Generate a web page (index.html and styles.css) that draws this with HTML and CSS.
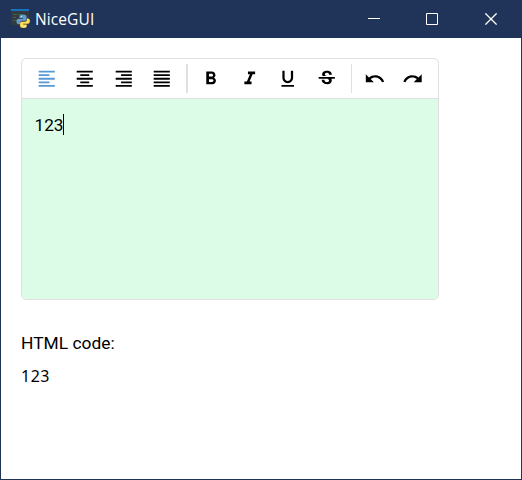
FILE: index.html
```
<!DOCTYPE html>
<html lang="en">
<head>
<meta charset="utf-8">
<title>NiceGUI</title>
<link rel="stylesheet" href="styles.css">
</head>
<body>
<div class="window">
  <header class="titlebar">
    <svg class="app-icon" viewBox="0 0 20 20">
      <path fill="#343b40" d="M0 1h18v15H0z"/><path fill="#1673bd" d="M0 0h18v2H0z"/>
      <path stroke="#366647" d="M2 5.500h4M7 5.500h3M2 8.500h3M2 11.500h4"/>
      <path fill="#629bc9" d="M11.500 5.500c-2.300 0-3 .8-3 2V9h3.500v.8H7.500C6 9.800 5.500 11 5.500 12.500s.7 2.700 2 2.700H9v-1.500c0-1.300.8-2 2-2h3c1 0 1.500-.6 1.500-1.500V7.500c0-1.200-1.500-2-4-2z"/>
      <path fill="#ffdf58" d="M12.700 19c2.300 0 3-.8 3-2v-1.500h-3.500v-.8h4.500c1.500 0 2.200-1.200 2.200-2.700s-.8-2.500-2-2.500h-1v1.300c0 1.300-.8 2-2 2h-3c-1 0-1.800.6-1.800 1.500V17c0 1.200 1.100 2 3.600 2z"/>
      <circle cx="10.300" cy="7.300" r=".6" fill="#fff"/><circle cx="14" cy="17.300" r=".6" fill="#fff"/>
    </svg>
    <h1 class="title">NiceGUI</h1>
    <div class="controls">
      <button aria-label="Minimize"><svg viewBox="0 0 12 12"><path d="M0 5.500h12"/></svg></button>
      <button aria-label="Maximize"><svg viewBox="0 0 12 12"><path d="M.5.5h11v11H.5z"/></svg></button>
      <button aria-label="Close"><svg viewBox="0 0 12 12"><path stroke-width="1.300" d="M.4.400l11.200 11.200M11.600.400L.4 11.600"/></svg></button>
    </div>
  </header>
  <main class="content">
    <section class="editor">
      <div class="toolbar">
        <div class="group">
          <button class="active" aria-label="Left"><svg viewBox="0 0 24 24"><path d="M15 15H3v2h12v-2zm0-8H3v2h12V7zM3 13h18v-2H3v2zm0 8h18v-2H3v2zM3 3v2h18V3H3z"/></svg></button>
          <button aria-label="Center"><svg viewBox="0 0 24 24"><path d="M7 15v2h10v-2H7zm-4 6h18v-2H3v2zm0-8h18v-2H3v2zm4-6v2h10V7H7zM3 3v2h18V3H3z"/></svg></button>
          <button aria-label="Right"><svg viewBox="0 0 24 24"><path d="M3 21h18v-2H3v2zm6-4h12v-2H9v2zm-6-4h18v-2H3v2zm6-4h12V7H9v2zM3 3v2h18V3H3z"/></svg></button>
          <button aria-label="Justify"><svg viewBox="0 0 24 24"><path d="M3 21h18v-2H3v2zm0-4h18v-2H3v2zm0-4h18v-2H3v2zm0-4h18V7H3v2zm0-6v2h18V3H3z"/></svg></button>
        </div>
        <div class="group divided wide">
          <button aria-label="Bold"><svg viewBox="0 0 24 24"><path d="M15.600 10.790c.97-.67 1.650-1.770 1.650-2.790 0-2.260-1.750-4-4-4H7v14h7.040c2.090 0 3.710-1.700 3.710-3.790 0-1.520-.86-2.820-2.150-3.420zM10 6.500h3c.83 0 1.500.67 1.500 1.500s-.67 1.500-1.500 1.500h-3v-3zm3.500 9H10v-3h3.500c.83 0 1.500.67 1.500 1.500s-.67 1.500-1.500 1.500z"/></svg></button>
          <button aria-label="Italic"><svg viewBox="0 0 24 24"><path d="M10 4v3h2.210l-3.420 8H6v3h8v-3h-2.210l3.420-8H18V4z"/></svg></button>
          <button aria-label="Underline"><svg viewBox="0 0 24 24"><path d="M12 17c3.310 0 6-2.690 6-6V3h-2.500v8c0 1.930-1.570 3.500-3.500 3.500S8.500 12.930 8.500 11V3H6v8c0 3.310 2.690 6 6 6zm-7 2v2h14v-2H5z"/></svg></button>
          <button aria-label="Strikethrough"><svg viewBox="0 0 24 24"><path d="M7.240 8.750c-.26-.48-.39-1.030-.39-1.670 0-.61.13-1.160.4-1.670.26-.5.63-.93 1.110-1.290.48-.35 1.050-.63 1.700-.83.66-.19 1.390-.29 2.180-.29.81 0 1.540.11 2.210.34.66.22 1.230.54 1.690.94.47.4.83.88 1.080 1.430.25.55.38 1.150.38 1.810h-3.010c0-.31-.05-.59-.15-.85-.09-.27-.24-.49-.44-.68-.2-.19-.45-.33-.75-.44-.3-.1-.66-.16-1.060-.16-.39 0-.74.04-1.030.13-.29.09-.53.21-.72.36-.19.16-.34.34-.44.55-.1.21-.15.43-.15.66 0 .48.25.88.74 1.210.38.25.77.48 1.410.7H7.390c-.05-.08-.11-.17-.15-.25zM21 12v-2H3v2h9.620c.18.070.4.140.55.200.37.170.66.340.87.510.21.170.35.360.43.570.07.200.11.430.11.690 0 .23-.05.450-.14.660-.09.200-.23.380-.42.530-.19.150-.42.260-.71.350-.29.080-.63.130-1.010.13-.43 0-.83-.04-1.180-.13s-.66-.23-.91-.42c-.25-.19-.45-.44-.59-.75-.14-.31-.25-.76-.25-1.210H6.400c0 .55.080 1.130.24 1.580.16.450.37.850.65 1.210.28.350.6.660.98.920.37.260.78.480 1.220.650.44.170.9.300 1.380.390.48.080.96.130 1.440.13.8 0 1.530-.09 2.180-.28s1.210-.45 1.670-.79c.46-.34.82-.77 1.070-1.270s.38-1.070.38-1.710c0-.6-.1-1.140-.31-1.610-.05-.11-.11-.23-.17-.33H21z"/></svg></button>
        </div>
        <div class="group divided">
          <button aria-label="Undo"><svg viewBox="0 0 24 24"><path d="M12.500 8c-2.650 0-5.050.99-6.900 2.600L2 7v9h9l-3.620-3.620c1.390-1.160 3.160-1.880 5.120-1.880 3.540 0 6.550 2.310 7.600 5.500l2.370-.78C21.080 11.030 17.150 8 12.500 8z"/></svg></button>
          <button aria-label="Redo"><svg viewBox="0 0 24 24"><path d="M18.400 10.600C16.550 8.990 14.150 8 11.500 8c-4.650 0-8.580 3.030-9.960 7.220L3.900 16c1.050-3.190 4.050-5.500 7.600-5.500 1.950 0 3.730.72 5.120 1.880L13 16h9V7l-3.600 3.600z"/></svg></button>
        </div>
      </div>
      <div class="editable">123<span class="caret"></span></div>
    </section>
    <p class="label">HTML code:</p>
    <p class="code">123</p>
  </main>
</div>
</body>
</html>
```
FILE: styles.css
```
* { box-sizing: border-box; }
body { margin: 0; background: #fff; }
h1, p { margin: 0; }
button { border: 0; padding: 0; background: none; color: inherit; }
.window { height: 480px; border: 1px solid #203358; border-top: 0; font-family: Roboto, sans-serif; color: #000; }
.titlebar { height: 38px; display: flex; align-items: center; padding: 0 1px 0 10px; background: #203358; color: #fff; }
.app-icon { width: 20px; height: 20px; }
.title { margin-left: 4px; font: 400 15.500px/20px "Open Sans", sans-serif; letter-spacing: .1px; }
.controls { display: flex; margin-left: auto; }
.controls button { width: 58.500px; height: 38px; display: flex; align-items: center; justify-content: center; }
.controls svg { width: 12px; height: 12px; fill: none; stroke: #fff; stroke-width: 1; }
.content { padding: 20px; }
.editor { width: 418px; height: 242px; display: flex; flex-direction: column; border: 1px solid #e0e0e0; border-radius: 5px; overflow: hidden; }
.toolbar { height: 40px; flex: none; display: flex; align-items: center; padding-left: 5px; border-bottom: 1px solid #e0e0e0; }
.group { display: flex; align-items: center; height: 29px; }
.divided { margin-left: 5px; padding-left: 3.600px; border-left: 1px solid #e0e0e0; }
.wide { margin-left: 4.800px; border-left-width: 2px; padding-left: 3.200px; }
.group button { width: 38.600px; height: 29px; display: flex; align-items: center; justify-content: center; }
.group svg { width: 21.500px; height: 21.500px; fill: currentColor; }
.group .active { color: #5898d4; }
.editable { flex: 1; display: flex; align-items: flex-start; padding: 14px 12.500px; background: #dcfce7; font-size: 17.150px; line-height: 24px; }
.caret { width: 1px; height: 21px; margin-top: 1px; background: #000; }
.label { margin-top: 30px; font-size: 17.400px; line-height: 26px; }
.code { margin-top: 8px; font: 16px/25px "Noto Sans", sans-serif; letter-spacing: .5px; }
```
